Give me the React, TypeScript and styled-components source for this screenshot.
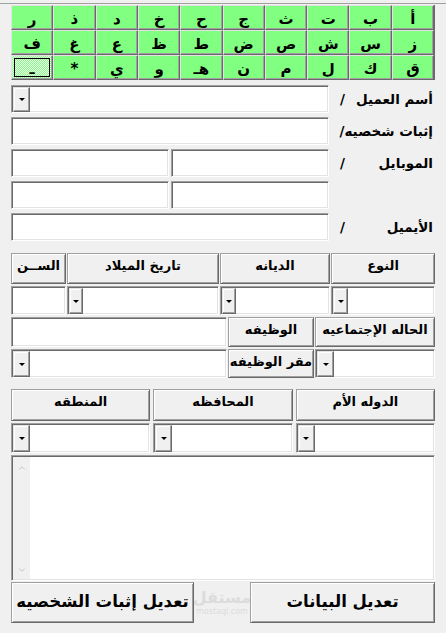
import styled, { createGlobalStyle } from "styled-components";
import { ChevronUp, ChevronDown } from "lucide-react";

const GlobalStyle = createGlobalStyle`
  html, body { margin: 0; padding: 0; background: #f0f0f0; }
  body { font-family: "DejaVu Sans", sans-serif; }
`;

const Window = styled.div`
  width: 446px;
  height: 630px;
  overflow: hidden;
  box-sizing: border-box;
  direction: rtl;
  margin-top: 3px;
  border-top: 1px solid #a0a0a0;
  padding: 1px 11px 0 11px;
  display: flex;
  flex-direction: column;
  font-family: "DejaVu Sans", sans-serif;
  font-weight: bold;
  color: #000;
`;

const Keyboard = styled.div`
  display: grid;
  grid-template-columns: repeat(10, 1fr);
  grid-auto-rows: 25px;
  border-right: 1px solid #696969;
`;

const Key = styled.button<{ $focused?: boolean }>`
  box-sizing: border-box;
  margin: 0;
  padding: 3px 0 0;
  background: ${(p) =>
    p.$focused
      ? "repeating-conic-gradient(#80ff80 0 25%, #f4fff4 0 50%) 0 0 / 2px 2px"
      : "#80ff80"};
  border: 1px solid;
  border-color: #e3e3e3 #696969 #696969 #e3e3e3;
  box-shadow: inset -1px -1px #a0a0a0;
  outline: ${(p) => (p.$focused ? "1px solid #000" : "none")};
  outline-offset: -4px;
  font: bold 15px "DejaVu Sans", sans-serif;
  color: #000;
  display: flex;
  align-items: center;
  justify-content: center;
`;

const Form = styled.div`
  display: grid;
  grid-template-columns: 104px 158px 158px;
  column-gap: 2px;
  row-gap: 4px;
  grid-auto-rows: 28px;
  margin-top: 5px;
`;

const Label = styled.div`
  display: flex;
  align-items: center;
  justify-content: space-between;
  padding: 0 2px 0 9px;
  font-size: 13.5px;
  white-space: nowrap;
`;

const Field = styled.div<{ $span?: number }>`
  box-sizing: border-box;
  grid-column: span ${(p) => p.$span ?? 1};
  background: #fff;
  border: 1px solid;
  border-color: #a0a0a0 #fff #fff #a0a0a0;
  box-shadow: inset 1px 1px #696969, inset -1px -1px #e3e3e3;
  display: flex;
  justify-content: flex-end;
  padding: 1px 0 0 1px;
`;

const DropBtn = styled.div<{ $w?: number }>`
  box-sizing: border-box;
  width: ${(p) => p.$w ?? 17}px;
  background: #f0f0f0;
  border: 1px solid;
  border-color: #e3e3e3 #696969 #696969 #e3e3e3;
  box-shadow: inset -1px -1px #a0a0a0, inset 1px 1px #fff;
  display: flex;
  align-items: center;
  justify-content: center;
  &::after {
    content: "";
    width: 0;
    height: 0;
    border-left: 3px solid transparent;
    border-right: 3px solid transparent;
    border-top: 3px solid #000;
  }
`;

const Section = styled.div<{ $top: number }>`
  display: flex;
  flex-direction: column;
  gap: 2px;
  margin-top: ${(p) => p.$top}px;
`;

const Row = styled.div<{ $cols: string; $h: number; $gap?: number }>`
  display: grid;
  grid-template-columns: ${(p) => p.$cols};
  column-gap: ${(p) => p.$gap ?? 1}px;
  height: ${(p) => p.$h}px;
`;

const HeadCell = styled.div`
  box-sizing: border-box;
  background: #f0f0f0;
  border: 1px solid;
  border-color: #a0a0a0 #696969 #696969 #a0a0a0;
  box-shadow: inset 1px 1px #fff, inset -1px -1px #a0a0a0;
  display: flex;
  justify-content: center;
  align-items: flex-start;
  padding-top: 4px;
  font-size: 13px;
  white-space: nowrap;
  overflow: hidden;
`;

const Memo = styled.div`
  box-sizing: border-box;
  height: 126px;
  margin-top: 2px;
  background: #fff;
  border: 1px solid;
  border-color: #a0a0a0 #fff #fff #a0a0a0;
  box-shadow: inset 1px 1px #696969, inset -1px -1px #e3e3e3;
  display: flex;
  justify-content: flex-end;
  padding: 1px 0 1px 1px;
`;

const ScrollBar = styled.div`
  width: 17px;
  background: #f0f0f0;
  display: flex;
  flex-direction: column;
  justify-content: space-between;
  align-items: center;
  padding: 6px 0 4px;
  color: #bfbfbf;
`;

const Footer = styled.div`
  display: flex;
  margin-top: 1px;
  height: 41px;
`;

const BigButton = styled.button<{ $w: number }>`
  box-sizing: border-box;
  width: ${(p) => p.$w}px;
  margin: 0;
  padding: 0 0 2px;
  background: #f0f0f0;
  border: 1px solid;
  border-color: #a0a0a0 #696969 #696969 #a0a0a0;
  box-shadow: inset 1px 1px #fff, inset -1px -1px #a0a0a0;
  font: bold 16.5px "DejaVu Sans", sans-serif;
  color: #000;
  white-space: nowrap;
  overflow: hidden;
`;

const Watermark = styled.div`
  flex: 1;
  overflow: hidden;
  direction: ltr;
  display: flex;
  flex-direction: column;
  align-items: center;
  justify-content: center;
  color: #dcdcdc;
  font-size: 16px;
  line-height: 18px;
  & small {
    font-size: 8px;
    line-height: 9px;
    font-weight: normal;
  }
`;

const rows = [
  ["أ", "ب", "ت", "ث", "ج", "ح", "خ", "د", "ذ", "ر"],
  ["ز", "س", "ش", "ص", "ض", "ط", "ظ", "ع", "غ", "ف"],
  ["ق", "ك", "ل", "م", "ن", "هـ", "و", "ي", "*", "ـ"],
];

const Combo = ({ w, span }: { w?: number; span?: number }) => (
  <Field $span={span}>
    <DropBtn $w={w} />
  </Field>
);

export default function App() {
  return (
    <>
      <GlobalStyle />
      <Window>
        <Keyboard>
          {rows.flat().map((k, i) => (
            <Key key={i} $focused={i === 29}>
              {k}
            </Key>
          ))}
        </Keyboard>

        <Form>
          <Label>
            <span>أسم العميل</span>
            <span>/</span>
          </Label>
          <Combo span={2} />
          <Label>
            <span>إثبات شخصيه</span>
            <span>/</span>
          </Label>
          <Field $span={2} />
          <Label>
            <span>الموبايل</span>
            <span>/</span>
          </Label>
          <Field />
          <Field />
          <Label />
          <Field />
          <Field />
          <Label>
            <span>الأيميل</span>
            <span>/</span>
          </Label>
          <Field $span={2} />
        </Form>

        <Section $top={12}>
          <Row $cols="104px 110px 152px 55px" $h={31}>
            <HeadCell>النوع</HeadCell>
            <HeadCell>الديانه</HeadCell>
            <HeadCell>تاريخ الميلاد</HeadCell>
            <HeadCell>الســن</HeadCell>
          </Row>
          <Row $cols="104px 110px 152px 55px" $h={29}>
            <Combo w={15} />
            <Combo w={14} />
            <Combo w={14} />
            <Field />
          </Row>
          <Row $cols="120px 86px 216px" $h={30}>
            <HeadCell>الحاله الإجتماعيه</HeadCell>
            <HeadCell>الوظيفه</HeadCell>
            <Field />
          </Row>
          <Row $cols="120px 86px 216px" $h={29}>
            <Combo />
            <HeadCell>مقر الوظيفه</HeadCell>
            <Combo />
          </Row>
        </Section>

        <Section $top={11}>
          <Row $cols="1fr 1fr 1fr" $h={32} $gap={3}>
            <HeadCell>الدوله الأم</HeadCell>
            <HeadCell>المحافظه</HeadCell>
            <HeadCell>المنطقه</HeadCell>
          </Row>
          <Row $cols="1fr 1fr 1fr" $h={30} $gap={3}>
            <Combo />
            <Combo />
            <Combo />
          </Row>
        </Section>

        <Memo>
          <ScrollBar>
            <ChevronUp size={10} strokeWidth={2} />
            <ChevronDown size={10} strokeWidth={2} />
          </ScrollBar>
        </Memo>

        <Footer>
          <BigButton $w={185}>تعديل البيانات</BigButton>
          <Watermark>
            <span>مستقل</span>
            <small>mostaql.com</small>
          </Watermark>
          <BigButton $w={183}>تعديل إثبات الشخصيه</BigButton>
        </Footer>
      </Window>
    </>
  );
}
